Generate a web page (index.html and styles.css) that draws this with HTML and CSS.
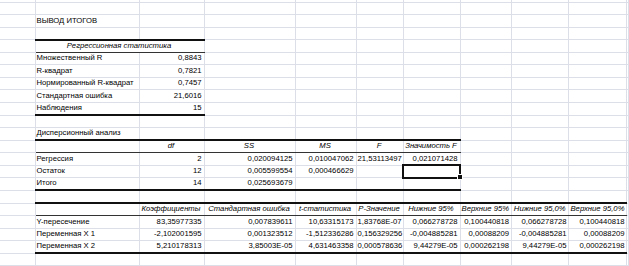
FILE: index.html
```html
<!DOCTYPE html>
<html lang="ru">
<head>
<meta charset="utf-8">
<title>Вывод итогов</title>
<link rel="stylesheet" href="styles.css">
</head>
<body>
<table class="sheet">
  <colgroup>
    <col class="col-a"><col class="col-b"><col class="col-c"><col class="col-d"><col class="col-e">
    <col class="col-f"><col class="col-g"><col class="col-h"><col class="col-i"><col class="col-j"><col class="col-k">
  </colgroup>
  <tr class="row-top"><td></td><td></td><td></td><td></td><td></td><td></td><td></td><td></td><td></td><td></td><td></td></tr>
  <tr><td></td><td></td><td></td><td></td><td></td><td></td><td></td><td></td><td></td><td></td><td></td></tr>
  <tr><td></td><td>ВЫВОД ИТОГОВ</td><td></td><td></td><td></td><td></td><td></td><td></td><td></td><td></td><td></td></tr>
  <tr><td></td><td></td><td></td><td></td><td></td><td></td><td></td><td></td><td></td><td></td><td></td></tr>
  <tr><td></td><td class="hd t-top h-bot" colspan="2">Регрессионная статистика</td><td></td><td></td><td></td><td></td><td></td><td></td><td></td><td></td></tr>
  <tr><td></td><td>Множественный R</td><td class="num">0,8843</td><td></td><td></td><td></td><td></td><td></td><td></td><td></td><td></td></tr>
  <tr><td></td><td>R-квадрат</td><td class="num">0,7821</td><td></td><td></td><td></td><td></td><td></td><td></td><td></td><td></td></tr>
  <tr><td></td><td>Нормированный R-квадрат</td><td class="num">0,7457</td><td></td><td></td><td></td><td></td><td></td><td></td><td></td><td></td></tr>
  <tr><td></td><td>Стандартная ошибка</td><td class="num">21,6016</td><td></td><td></td><td></td><td></td><td></td><td></td><td></td><td></td></tr>
  <tr><td></td><td class="t-bot">Наблюдения</td><td class="num t-bot">15</td><td></td><td></td><td></td><td></td><td></td><td></td><td></td><td></td></tr>
  <tr><td></td><td></td><td></td><td></td><td></td><td></td><td></td><td></td><td></td><td></td><td></td></tr>
  <tr><td></td><td>Дисперсионный анализ</td><td></td><td></td><td></td><td></td><td></td><td></td><td></td><td></td><td></td></tr>
  <tr><td></td><td class="t-top h-bot"></td><td class="hd t-top h-bot">df</td><td class="hd t-top h-bot">SS</td><td class="hd t-top h-bot">MS</td><td class="hd t-top h-bot">F</td><td class="hd t-top h-bot">Значимость F</td><td></td><td></td><td></td><td></td></tr>
  <tr><td></td><td>Регрессия</td><td class="num">2</td><td class="num">0,020094125</td><td class="num">0,010047062</td><td class="num">21,53113497</td><td class="num">0,021071428</td><td></td><td></td><td></td><td></td></tr>
  <tr><td></td><td>Остаток</td><td class="num">12</td><td class="num">0,005599554</td><td class="num">0,000466629</td><td></td><td class="active"></td><td></td><td></td><td></td><td></td></tr>
  <tr><td></td><td class="t-bot">Итого</td><td class="num t-bot">14</td><td class="num t-bot">0,025693679</td><td class="t-bot"></td><td class="t-bot"></td><td class="t-bot"></td><td></td><td></td><td></td><td></td></tr>
  <tr><td></td><td></td><td></td><td></td><td></td><td></td><td></td><td></td><td></td><td></td><td></td></tr>
  <tr><td></td><td class="t-top h-bot"></td><td class="hd t-top h-bot">Коэффициенты</td><td class="hd t-top h-bot">Стандартная ошибка</td><td class="hd t-top h-bot">t-статистика</td><td class="hd t-top h-bot">P-Значение</td><td class="hd t-top h-bot">Нижние 95%</td><td class="hd t-top h-bot">Верхние 95%</td><td class="hd t-top h-bot">Нижние 95,0%</td><td class="hd t-top h-bot">Верхние 95,0%</td><td></td></tr>
  <tr><td></td><td>Y-пересечение</td><td class="num">83,35977335</td><td class="num">0,007839611</td><td class="num">10,63315173</td><td class="num">1,83768E-07</td><td class="num">0,066278728</td><td class="num">0,100440818</td><td class="num">0,066278728</td><td class="num">0,100440818</td><td></td></tr>
  <tr><td></td><td>Переменная X 1</td><td class="num">-2,102001595</td><td class="num">0,001323512</td><td class="num">-1,512336286</td><td class="num">0,156329256</td><td class="num">-0,004885281</td><td class="num">0,00088209</td><td class="num">-0,004885281</td><td class="num">0,00088209</td><td></td></tr>
  <tr><td></td><td class="t-bot">Переменная X 2</td><td class="num t-bot">5,210178313</td><td class="num t-bot">3,85003E-05</td><td class="num t-bot">4,631463358</td><td class="num t-bot">0,000578636</td><td class="num t-bot">9,44279E-05</td><td class="num t-bot">0,000262198</td><td class="num t-bot">9,44279E-05</td><td class="num t-bot">0,000262198</td><td></td></tr>
  <tr><td></td><td></td><td></td><td></td><td></td><td></td><td></td><td></td><td></td><td></td><td></td></tr>
</table>
</body>
</html>
```

FILE: styles.css
```css
html, body {
  margin: 0;
  padding: 0;
  background: #ffffff;
}

body {
  width: 629px;
  height: 266px;
  overflow: hidden;
}

.sheet {
  table-layout: fixed;
  border-collapse: collapse;
  width: 629px;
  font-family: "Liberation Sans", Arial, sans-serif;
  font-size: 7.7px;
  color: #000000;
}

.col-a { width: 35px; }
.col-b { width: 104px; }
.col-c { width: 65px; }
.col-d { width: 91px; }
.col-e { width: 61px; }
.col-f { width: 47px; }
.col-g { width: 57px; }
.col-h { width: 51.6px; }
.col-i { width: 57.4px; }
.col-j { width: 58px; }
.col-k { width: 2px; }

.sheet tr {
  height: 12.57px;
}

.sheet tr.row-top {
  height: 2px;
}

.sheet td {
  padding: 0 2px 2px 1px;
  border-right: 1px solid #dcdfe7;
  border-bottom: 1px solid #dcdfe7;
  white-space: nowrap;
  overflow: visible;
  vertical-align: bottom;
  line-height: 8px;
}

.sheet tr.row-top td {
  padding: 0;
  line-height: 0;
}

.num {
  text-align: right;
}

.hd {
  font-style: italic;
  text-align: center;
}

.t-top {
  border-top: 2px solid #111;
}

.sheet td.h-bot {
  border-bottom: 1px solid #333;
}

.sheet td.t-bot {
  border-bottom: 2px solid #111;
}

.sheet td.active {
  position: relative;
  outline: 2px solid #111;
  outline-offset: -1px;
}

.sheet td.active::after {
  content: "";
  position: absolute;
  right: -3px;
  bottom: -3px;
  width: 4px;
  height: 4px;
  background: #111;
  border: 1px solid #fff;
}
```
